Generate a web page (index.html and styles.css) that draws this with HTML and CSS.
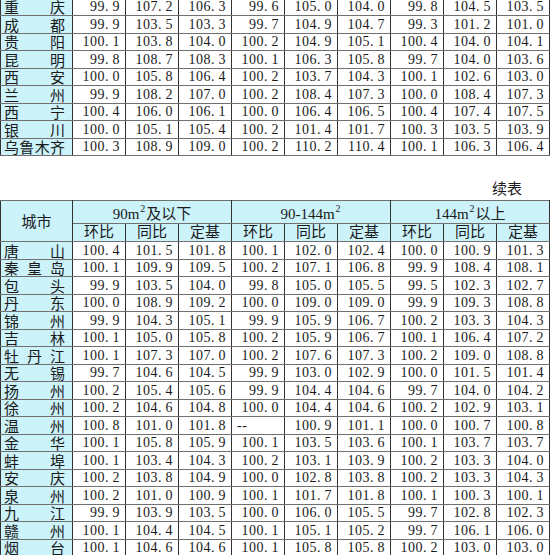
FILE: index.html
```
<!DOCTYPE html>
<html lang="zh-CN">
<head>
<meta charset="utf-8">
<title>70个大中城市新建商品住宅价格指数 续表</title>
<link rel="stylesheet" href="styles.css">
</head>
<body>
<div class="page">
  <table class="grid top">
    <colgroup><col class="c-city"><col span="9"></colgroup>
    <tbody>
      <tr><td class="city">重庆</td><td>99<i>.</i>9</td><td>107<i>.</i>2</td><td>106<i>.</i>3</td><td>99<i>.</i>6</td><td>105<i>.</i>0</td><td>104<i>.</i>0</td><td>99<i>.</i>8</td><td>104<i>.</i>5</td><td>103<i>.</i>5</td></tr>
      <tr><td class="city">成都</td><td>99<i>.</i>9</td><td>103<i>.</i>5</td><td>103<i>.</i>3</td><td>99<i>.</i>7</td><td>104<i>.</i>9</td><td>104<i>.</i>7</td><td>99<i>.</i>3</td><td>101<i>.</i>2</td><td>101<i>.</i>0</td></tr>
      <tr><td class="city">贵阳</td><td>100<i>.</i>1</td><td>103<i>.</i>8</td><td>104<i>.</i>0</td><td>100<i>.</i>2</td><td>104<i>.</i>9</td><td>105<i>.</i>1</td><td>100<i>.</i>4</td><td>104<i>.</i>0</td><td>104<i>.</i>1</td></tr>
      <tr><td class="city">昆明</td><td>99<i>.</i>8</td><td>108<i>.</i>7</td><td>108<i>.</i>3</td><td>100<i>.</i>1</td><td>106<i>.</i>3</td><td>105<i>.</i>8</td><td>99<i>.</i>7</td><td>104<i>.</i>0</td><td>103<i>.</i>6</td></tr>
      <tr><td class="city">西安</td><td>100<i>.</i>0</td><td>105<i>.</i>8</td><td>106<i>.</i>4</td><td>100<i>.</i>2</td><td>103<i>.</i>7</td><td>104<i>.</i>3</td><td>100<i>.</i>1</td><td>102<i>.</i>6</td><td>103<i>.</i>0</td></tr>
      <tr><td class="city">兰州</td><td>99<i>.</i>9</td><td>108<i>.</i>2</td><td>107<i>.</i>0</td><td>100<i>.</i>2</td><td>108<i>.</i>4</td><td>107<i>.</i>3</td><td>100<i>.</i>0</td><td>108<i>.</i>4</td><td>107<i>.</i>3</td></tr>
      <tr><td class="city">西宁</td><td>100<i>.</i>4</td><td>106<i>.</i>0</td><td>106<i>.</i>1</td><td>100<i>.</i>0</td><td>106<i>.</i>4</td><td>106<i>.</i>5</td><td>100<i>.</i>4</td><td>107<i>.</i>4</td><td>107<i>.</i>5</td></tr>
      <tr><td class="city">银川</td><td>100<i>.</i>0</td><td>105<i>.</i>1</td><td>105<i>.</i>4</td><td>100<i>.</i>2</td><td>101<i>.</i>4</td><td>101<i>.</i>7</td><td>100<i>.</i>3</td><td>103<i>.</i>5</td><td>103<i>.</i>9</td></tr>
      <tr><td class="city">乌鲁木齐</td><td>100<i>.</i>3</td><td>108<i>.</i>9</td><td>109<i>.</i>0</td><td>100<i>.</i>2</td><td>110<i>.</i>2</td><td>110<i>.</i>4</td><td>100<i>.</i>1</td><td>106<i>.</i>3</td><td>106<i>.</i>4</td></tr>
    </tbody>
  </table>

  <div class="note">续表</div>

  <table class="grid bottom">
    <colgroup><col class="c-city"><col span="9"></colgroup>
    <thead>
      <tr class="h1">
        <th rowspan="2" class="hcity">城市</th>
        <th colspan="3">90m<sup>2</sup>及以下</th>
        <th colspan="3">90-144m<sup>2</sup></th>
        <th colspan="3">144m<sup>2</sup>以上</th>
      </tr>
      <tr class="h2">
        <th>环比</th><th>同比</th><th>定基</th>
        <th>环比</th><th>同比</th><th>定基</th>
        <th>环比</th><th>同比</th><th>定基</th>
      </tr>
    </thead>
    <tbody>
      <tr><td class="city">唐山</td><td>100<i>.</i>4</td><td>101<i>.</i>5</td><td>101<i>.</i>8</td><td>100<i>.</i>1</td><td>102<i>.</i>0</td><td>102<i>.</i>4</td><td>100<i>.</i>0</td><td>100<i>.</i>9</td><td>101<i>.</i>3</td></tr>
      <tr><td class="city">秦皇岛</td><td>100<i>.</i>1</td><td>109<i>.</i>9</td><td>109<i>.</i>5</td><td>100<i>.</i>2</td><td>107<i>.</i>1</td><td>106<i>.</i>8</td><td>99<i>.</i>9</td><td>108<i>.</i>4</td><td>108<i>.</i>1</td></tr>
      <tr><td class="city">包头</td><td>99<i>.</i>9</td><td>103<i>.</i>5</td><td>104<i>.</i>0</td><td>99<i>.</i>8</td><td>105<i>.</i>0</td><td>105<i>.</i>5</td><td>99<i>.</i>5</td><td>102<i>.</i>3</td><td>102<i>.</i>7</td></tr>
      <tr><td class="city">丹东</td><td>100<i>.</i>0</td><td>108<i>.</i>9</td><td>109<i>.</i>2</td><td>100<i>.</i>0</td><td>109<i>.</i>0</td><td>109<i>.</i>0</td><td>99<i>.</i>9</td><td>109<i>.</i>3</td><td>108<i>.</i>8</td></tr>
      <tr><td class="city">锦州</td><td>99<i>.</i>9</td><td>104<i>.</i>3</td><td>105<i>.</i>1</td><td>99<i>.</i>9</td><td>105<i>.</i>9</td><td>106<i>.</i>7</td><td>100<i>.</i>2</td><td>103<i>.</i>3</td><td>104<i>.</i>3</td></tr>
      <tr><td class="city">吉林</td><td>100<i>.</i>1</td><td>105<i>.</i>0</td><td>105<i>.</i>8</td><td>100<i>.</i>2</td><td>105<i>.</i>9</td><td>106<i>.</i>7</td><td>100<i>.</i>1</td><td>106<i>.</i>4</td><td>107<i>.</i>2</td></tr>
      <tr><td class="city">牡丹江</td><td>100<i>.</i>1</td><td>107<i>.</i>3</td><td>107<i>.</i>0</td><td>100<i>.</i>2</td><td>107<i>.</i>6</td><td>107<i>.</i>3</td><td>100<i>.</i>2</td><td>109<i>.</i>0</td><td>108<i>.</i>8</td></tr>
      <tr><td class="city">无锡</td><td>99<i>.</i>7</td><td>104<i>.</i>6</td><td>104<i>.</i>5</td><td>99<i>.</i>9</td><td>103<i>.</i>0</td><td>102<i>.</i>9</td><td>100<i>.</i>0</td><td>101<i>.</i>5</td><td>101<i>.</i>4</td></tr>
      <tr><td class="city">扬州</td><td>100<i>.</i>2</td><td>105<i>.</i>4</td><td>105<i>.</i>6</td><td>99<i>.</i>9</td><td>104<i>.</i>4</td><td>104<i>.</i>6</td><td>99<i>.</i>7</td><td>104<i>.</i>0</td><td>104<i>.</i>2</td></tr>
      <tr><td class="city">徐州</td><td>100<i>.</i>2</td><td>104<i>.</i>6</td><td>104<i>.</i>8</td><td>100<i>.</i>0</td><td>104<i>.</i>4</td><td>104<i>.</i>6</td><td>100<i>.</i>2</td><td>102<i>.</i>9</td><td>103<i>.</i>1</td></tr>
      <tr><td class="city">温州</td><td>100<i>.</i>8</td><td>101<i>.</i>0</td><td>101<i>.</i>8</td><td class="dash">--</td><td>100<i>.</i>9</td><td>101<i>.</i>1</td><td>100<i>.</i>0</td><td>100<i>.</i>7</td><td>100<i>.</i>8</td></tr>
      <tr><td class="city">金华</td><td>100<i>.</i>1</td><td>105<i>.</i>8</td><td>105<i>.</i>9</td><td>100<i>.</i>1</td><td>103<i>.</i>5</td><td>103<i>.</i>6</td><td>100<i>.</i>1</td><td>103<i>.</i>7</td><td>103<i>.</i>7</td></tr>
      <tr><td class="city">蚌埠</td><td>100<i>.</i>1</td><td>103<i>.</i>4</td><td>104<i>.</i>3</td><td>100<i>.</i>2</td><td>103<i>.</i>1</td><td>103<i>.</i>9</td><td>100<i>.</i>2</td><td>103<i>.</i>3</td><td>104<i>.</i>0</td></tr>
      <tr><td class="city">安庆</td><td>100<i>.</i>2</td><td>103<i>.</i>8</td><td>104<i>.</i>9</td><td>100<i>.</i>0</td><td>102<i>.</i>8</td><td>103<i>.</i>8</td><td>100<i>.</i>2</td><td>103<i>.</i>3</td><td>104<i>.</i>3</td></tr>
      <tr><td class="city">泉州</td><td>100<i>.</i>2</td><td>101<i>.</i>0</td><td>100<i>.</i>9</td><td>100<i>.</i>1</td><td>101<i>.</i>7</td><td>101<i>.</i>8</td><td>100<i>.</i>1</td><td>100<i>.</i>3</td><td>100<i>.</i>1</td></tr>
      <tr><td class="city">九江</td><td>99<i>.</i>9</td><td>103<i>.</i>9</td><td>103<i>.</i>5</td><td>100<i>.</i>0</td><td>106<i>.</i>0</td><td>105<i>.</i>5</td><td>99<i>.</i>7</td><td>102<i>.</i>8</td><td>102<i>.</i>3</td></tr>
      <tr><td class="city">赣州</td><td>100<i>.</i>1</td><td>104<i>.</i>4</td><td>104<i>.</i>5</td><td>100<i>.</i>1</td><td>105<i>.</i>1</td><td>105<i>.</i>2</td><td>99<i>.</i>7</td><td>106<i>.</i>1</td><td>106<i>.</i>0</td></tr>
      <tr><td class="city">烟台</td><td>100<i>.</i>1</td><td>104<i>.</i>6</td><td>104<i>.</i>6</td><td>100<i>.</i>1</td><td>105<i>.</i>8</td><td>105<i>.</i>8</td><td>100<i>.</i>2</td><td>103<i>.</i>0</td><td>103<i>.</i>0</td></tr>
    </tbody>
  </table>
</div>
</body>
</html>
```

FILE: styles.css
```
* { box-sizing: border-box; }

body {
  margin: 0;
  background: #ffffff;
}

.page {
  width: 550px;
  height: 555px;
  overflow: hidden;
}

.grid {
  width: 550px;
  table-layout: fixed;
  border-collapse: collapse;
  font-family: "Liberation Serif", "Noto Sans CJK SC", serif;
  font-size: 14px;
  color: #1a1a1a;
}

.grid .c-city { width: 72px; }

.grid td,
.grid th {
  height: 17.5px;
  padding: 0 5px 1px 0;
  border-left: 1px solid #333333;
  border-right: 1px solid #333333;
  border-top: 1px solid #707070;
  border-bottom: 1px solid #707070;
  text-align: right;
  vertical-align: bottom;
  white-space: nowrap;
  line-height: 15px;
  letter-spacing: 0.5px;
}

.grid i {
  font-style: normal;
  display: inline-block;
  width: 7.5px;
  text-align: left;
}

.grid td.city {
  background: #ccf2fa;
  font-family: "Noto Sans CJK SC", sans-serif;
  font-size: 15px;
  letter-spacing: 0;
  text-align: justify;
  text-align-last: justify;
  padding: 0 7px 1px 3px;
}

.grid td.dash {
  text-align: left;
  padding-left: 5px;
}

.top {
  margin-top: -2.5px;
}

.note {
  height: 44px;
  display: flex;
  justify-content: flex-end;
  align-items: flex-end;
  padding: 0 28px 5px 0;
  font-family: "Noto Sans CJK SC", sans-serif;
  font-size: 15px;
  line-height: 15px;
  color: #1a1a1a;
}

.grid thead th {
  background: #ccf2fa;
  font-weight: normal;
  text-align: center;
  padding: 0 0 1px 0;
  letter-spacing: 0;
  font-family: "Liberation Serif", "Noto Sans CJK SC", serif;
  font-size: 15px;
}

.grid .h1 th { height: 22.5px; }
.grid .h2 th { height: 18.5px; }

.grid th.hcity {
  vertical-align: middle;
  font-family: "Noto Sans CJK SC", sans-serif;
  padding: 0 0 2px 0;
}

.grid sup {
  font-size: 10px;
  line-height: 0;
  vertical-align: 7px;
  margin: 0 1px;
}
```
